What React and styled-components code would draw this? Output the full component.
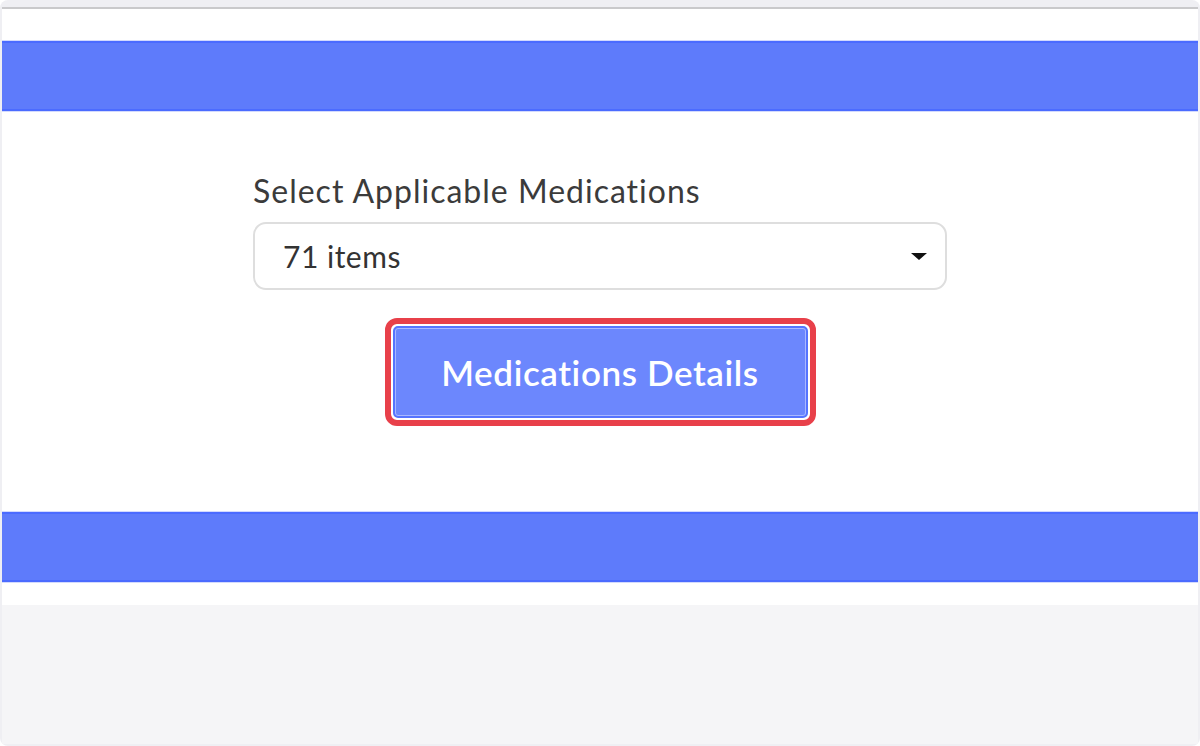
import React from 'react';
import styled, { createGlobalStyle } from 'styled-components';

const GlobalStyle = createGlobalStyle`
  html, body {
    margin: 0;
    padding: 0;
    background: #ffffff;
  }
  body {
    font-family: Lato, "Open Sans", sans-serif;
  }
`;

const Frame = styled.div`
  box-sizing: border-box;
  width: 1200px;
  height: 746px;
  padding: 7px 2px 2px 2px;
  background: #efeff3;
  border-radius: 8px;
  display: flex;
  flex-direction: column;
  overflow: hidden;
`;

const Panel = styled.div`
  background: #ffffff;
  border-top: 2px solid #c9c9cb;
  padding-top: 32px;
  padding-bottom: 23px;
  display: flex;
  flex-direction: column;
`;

const Band = styled.div`
  height: 66px;
  background: #5e7bfb;
  border-top: 2px solid #4b6bff;
  border-bottom: 2px solid #4b6bff;
  box-shadow: 0 -1px 0 #d3dafd, 0 1px 0 #d3dafd;
`;

const Form = styled.div`
  width: 694px;
  margin: 0 auto;
  padding: 61px 0 86px;
  display: flex;
  flex-direction: column;
  align-items: center;
`;

const Label = styled.label`
  align-self: stretch;
  font-size: 32px;
  line-height: 38px;
  letter-spacing: 1px;
  color: #3b3b3b;
  margin-bottom: 12px;
`;

const SelectBox = styled.div`
  box-sizing: border-box;
  align-self: stretch;
  height: 68px;
  border: 2px solid #dedede;
  border-radius: 13px;
  padding: 0 18px 0 28px;
  display: flex;
  align-items: center;
  justify-content: space-between;
  font-size: 30px;
  letter-spacing: 0.5px;
  color: #333333;
  margin-bottom: 28px;
`;

const Caret = styled.span`
  width: 0;
  height: 0;
  border-left: 8px solid transparent;
  border-right: 8px solid transparent;
  border-top: 7px solid #111111;
`;

const Highlight = styled.div`
  border: 6px solid #e8404a;
  border-radius: 12px;
  padding: 2px;
  display: flex;
`;

const Button = styled.button`
  box-sizing: border-box;
  width: 415px;
  height: 92px;
  background: #6c87fd;
  border: 2px solid #5574ff;
  box-shadow: inset 0 0 0 1px #a9b8ff;
  border-radius: 5px;
  color: #ffffff;
  font-family: Lato, "Open Sans", sans-serif;
  font-size: 35px;
  font-weight: 600;
  letter-spacing: 0.6px;
  cursor: pointer;
`;

const Footer = styled.div`
  flex: 1;
  background: #f5f5f7;
`;

export default function App() {
  return (
    <>
      <GlobalStyle />
      <Frame>
        <Panel>
          <Band />
          <Form>
            <Label>Select Applicable Medications</Label>
            <SelectBox>
              <span>71 items</span>
              <Caret />
            </SelectBox>
            <Highlight>
              <Button>Medications Details</Button>
            </Highlight>
          </Form>
          <Band />
        </Panel>
        <Footer />
      </Frame>
    </>
  );
}
